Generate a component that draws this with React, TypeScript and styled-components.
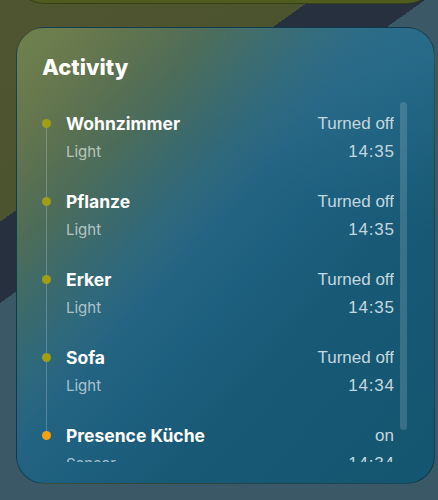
import React from "react";
import styled, { createGlobalStyle } from "styled-components";

const Global = createGlobalStyle`
  html, body { margin: 0; padding: 0; height: 100%; }
  body {
    overflow: hidden;
    background: linear-gradient(144.5deg,
      #4f5530 0%, #4c542f 27.3%,
      #26303e 27.3%, #26303e 37.3%,
      #3a5866 37.3%, #3a5866 100%);
    font-family: Inter, "Noto Sans", sans-serif;
  }
  #root { height: 100%; }
`;

const Page = styled.div`
  display: flex;
  flex-direction: column;
  padding-left: 16px;
  width: 419px;
`;

const PrevCard = styled.div`
  height: 60px;
  margin-top: -56px;
  border-radius: 28px;
  background: #505c1d;
  border: 1px solid rgba(20, 30, 10, 0.45);
  box-sizing: border-box;
`;

const Card = styled.section`
  margin-top: 23px;
  height: 457px;
  box-sizing: border-box;
  border-radius: 28px;
  border: 1px solid rgba(8, 30, 40, 0.5);
  background:
    radial-gradient(ellipse 260px 200px at 100% 0%, rgba(60, 130, 160, 0.3) 0%, rgba(60, 130, 160, 0) 100%),
    linear-gradient(132deg, #71824f 0%, #68794d 9%, #5b7151 17%, #4b6c5b 25%, #3c6a6c 32%, #2e687c 39%, #246483 46%, #1d5f7e 55%, #185a76 67%, #14556f 100%);
  display: flex;
  flex-direction: column;
  padding: 25px 27px 21px 25px;
  overflow: hidden;
`;

const Title = styled.h2`
  margin: 0;
  font-family: Inter, sans-serif;
  font-weight: 800;
  font-size: 22px;
  line-height: 28px;
  color: #fff;
`;

const ListArea = styled.div`
  margin-top: 21px;
  flex: 1;
  min-height: 0;
  display: flex;
  gap: 6px;
`;

const Viewport = styled.div`
  flex: 1;
  overflow: hidden;
  padding-top: 10px;
`;

const Track = styled.div`
  width: 7px;
  display: flex;
  flex-direction: column;
`;

const Thumb = styled.div<{ $h: number }>`
  height: ${(p) => p.$h}px;
  border-radius: 4px;
  background: rgba(255, 255, 255, 0.15);
`;

const Row = styled.div`
  display: grid;
  grid-template-columns: 9px 1fr;
  column-gap: 15px;
`;

const Marker = styled.div`
  display: flex;
  flex-direction: column;
  align-items: center;
`;

const Line = styled.div<{ $hidden?: boolean; $grow?: boolean }>`
  width: 1px;
  height: ${(p) => (p.$grow ? "auto" : "7px")};
  flex: ${(p) => (p.$grow ? 1 : "none")};
  background: ${(p) => (p.$hidden ? "transparent" : "rgba(255,255,255,0.22)")};
`;

const Dot = styled.div<{ $color: string }>`
  width: 9px;
  height: 9px;
  border-radius: 50%;
  background: ${(p) => p.$color};
  flex: none;
`;

const Body = styled.div`
  display: flex;
  flex-direction: column;
  gap: 4px;
  padding-bottom: 26px;
`;

const Line1 = styled.div`
  display: flex;
  justify-content: space-between;
  align-items: center;
  height: 24px;
`;

const Name = styled.span`
  font-family: Inter, sans-serif;
  font-weight: 700;
  font-size: 17.5px;
  line-height: 24px;
  color: #fff;
`;

const Sub = styled.span`
  font-family: Inter, sans-serif;
  font-weight: 400;
  font-size: 15px;
  line-height: 24px;
  color: rgba(255, 255, 255, 0.62);
`;

const Status = styled.span`
  font-family: "Liberation Sans", Arial, sans-serif;
  font-size: 17px;
  line-height: 24px;
  color: #c3d7df;
`;

const Time = styled(Status)`
  letter-spacing: 0.8px;
  margin-right: -0.8px;
`;

type Item = { name: string; kind: string; state: string; time: string; color: string };

const items: Item[] = [
  { name: "Wohnzimmer", kind: "Light", state: "Turned off", time: "14:35", color: "#a19d14" },
  { name: "Pflanze", kind: "Light", state: "Turned off", time: "14:35", color: "#a19d14" },
  { name: "Erker", kind: "Light", state: "Turned off", time: "14:35", color: "#a19d14" },
  { name: "Sofa", kind: "Light", state: "Turned off", time: "14:34", color: "#a19d14" },
  { name: "Presence Küche", kind: "Sensor", state: "on", time: "14:34", color: "#f59f12" },
];

export default function App() {
  return (
    <>
      <Global />
      <Page>
        <PrevCard />
        <Card>
          <Title>Activity</Title>
          <ListArea>
            <Viewport>
              {items.map((it, i) => (
                <Row key={it.name}>
                  <Marker>
                    <Line $hidden={i === 0} />
                    <Dot $color={it.color} />
                    <Line $grow $hidden={i === items.length - 1} />
                  </Marker>
                  <Body>
                    <Line1>
                      <Name>{it.name}</Name>
                      <Status>{it.state}</Status>
                    </Line1>
                    <Line1>
                      <Sub>{it.kind}</Sub>
                      <Time>{it.time}</Time>
                    </Line1>
                  </Body>
                </Row>
              ))}
            </Viewport>
            <Track>
              <Thumb $h={328} />
            </Track>
          </ListArea>
        </Card>
      </Page>
    </>
  );
}
